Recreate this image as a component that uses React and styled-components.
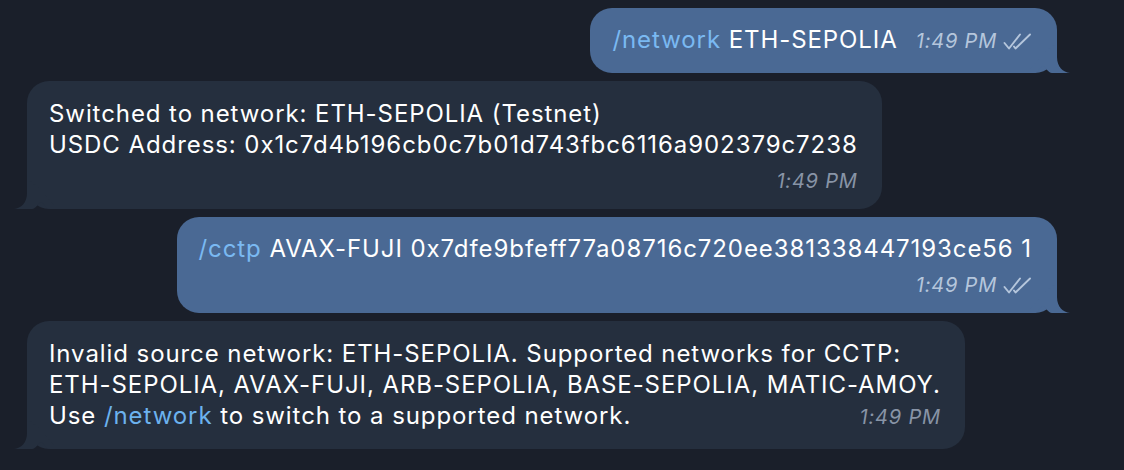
import React from 'react';
import styled, { createGlobalStyle } from 'styled-components';

const GlobalStyle = createGlobalStyle`
  html, body {
    margin: 0;
    padding: 0;
    background: #1a1f2a;
  }
  body {
    font-family: Inter, "Noto Sans", "Liberation Sans", sans-serif;
    -webkit-font-smoothing: antialiased;
  }
`;

const Chat = styled.div`
  width: 1124px;
  height: 470px;
  box-sizing: border-box;
  padding: 8px 67px 0 27px;
  display: flex;
  flex-direction: column;
  gap: 8px;
  overflow: hidden;
`;

const Bubble = styled.div`
  position: relative;
  align-self: ${p => (p.$out ? 'flex-end' : 'flex-start')};
  background: ${p => (p.$out ? '#4a6994' : '#252f3e')};
  color: #ffffff;
  border-radius: 22px;
  padding: ${p => (p.$out ? '16px 25px 16px 22px' : '17px 24px 16px 22px')};
  font-size: 24px;
  letter-spacing: 0.92px;
  line-height: 31px;
  display: flex;
  flex-direction: column;
`;

const Line = styled.div`
  white-space: nowrap;
  display: flex;
  align-items: baseline;
  justify-content: space-between;
  gap: 18px;
`;

const Cmd = styled.span`
  color: ${p => (p.$out ? '#7ab9f2' : '#6cb2ee')};
`;

const MetaRow = styled.div`
  display: flex;
  justify-content: flex-end;
  margin-top: 9px;
  line-height: 24px;
`;

const Meta = styled.span`
  display: inline-flex;
  align-items: center;
  gap: 6px;
  font-size: 20px;
  letter-spacing: 0.8px;
  font-style: italic;
  color: ${p => (p.$out ? '#b5c6dc' : '#8894a6')};
`;

const Tail = styled.svg`
  position: absolute;
  bottom: 0;
  width: 40px;
  height: 30px;
  ${p => (p.$out ? 'right: -13px; transform: scaleX(-1);' : 'left: -13px;')}
`;

function BubbleTail({ out }) {
  return (
    <Tail $out={out} viewBox="0 0 40 30">
      <path
        d="M13,0 L13,14 C13,24 7,29 0,30 L18,30 C22,30 24,24 27,23 C30,24 31,29 36,30 L40,30 L40,26 L24,8 L13,0 Z"
        fill={out ? '#4a6994' : '#252f3e'}
      />
    </Tail>
  );
}

function Checks() {
  return (
    <svg width="29" height="17" viewBox="0 0 29 17" fill="none" stroke="#b5c6dc" strokeWidth="1.9" strokeLinecap="round" strokeLinejoin="round">
      <path d="M1.5,10 L6,15.5 L17,1.5" />
      <path d="M11,13.5 L12.5,15.5 L27,1.5" />
    </svg>
  );
}

function Time({ out }) {
  return (
    <Meta $out={out}>
      1:49 PM
      {out && <Checks />}
    </Meta>
  );
}

export default function App() {
  return (
    <>
      <GlobalStyle />
      <Chat>
        <Bubble $out>
          <Line>
            <span><Cmd $out>/network</Cmd> ETH-SEPOLIA</span>
            <Time out />
          </Line>
          <BubbleTail out />
        </Bubble>

        <Bubble>
          <Line>Switched to network: ETH-SEPOLIA (Testnet)</Line>
          <Line>USDC Address: 0x1c7d4b196cb0c7b01d743fbc6116a902379c7238</Line>
          <MetaRow><Time /></MetaRow>
          <BubbleTail />
        </Bubble>

        <Bubble $out>
          <Line>
            <span><Cmd $out>/cctp</Cmd> AVAX-FUJI 0x7dfe9bfeff77a08716c720ee381338447193ce56 1</span>
          </Line>
          <MetaRow><Time out /></MetaRow>
          <BubbleTail out />
        </Bubble>

        <Bubble>
          <Line>Invalid source network: ETH-SEPOLIA. Supported networks for CCTP:</Line>
          <Line>ETH-SEPOLIA, AVAX-FUJI, ARB-SEPOLIA, BASE-SEPOLIA, MATIC-AMOY.</Line>
          <Line>
            <span>Use <Cmd>/network</Cmd> to switch to a supported network.</span>
            <Time />
          </Line>
          <BubbleTail />
        </Bubble>
      </Chat>
    </>
  );
}
